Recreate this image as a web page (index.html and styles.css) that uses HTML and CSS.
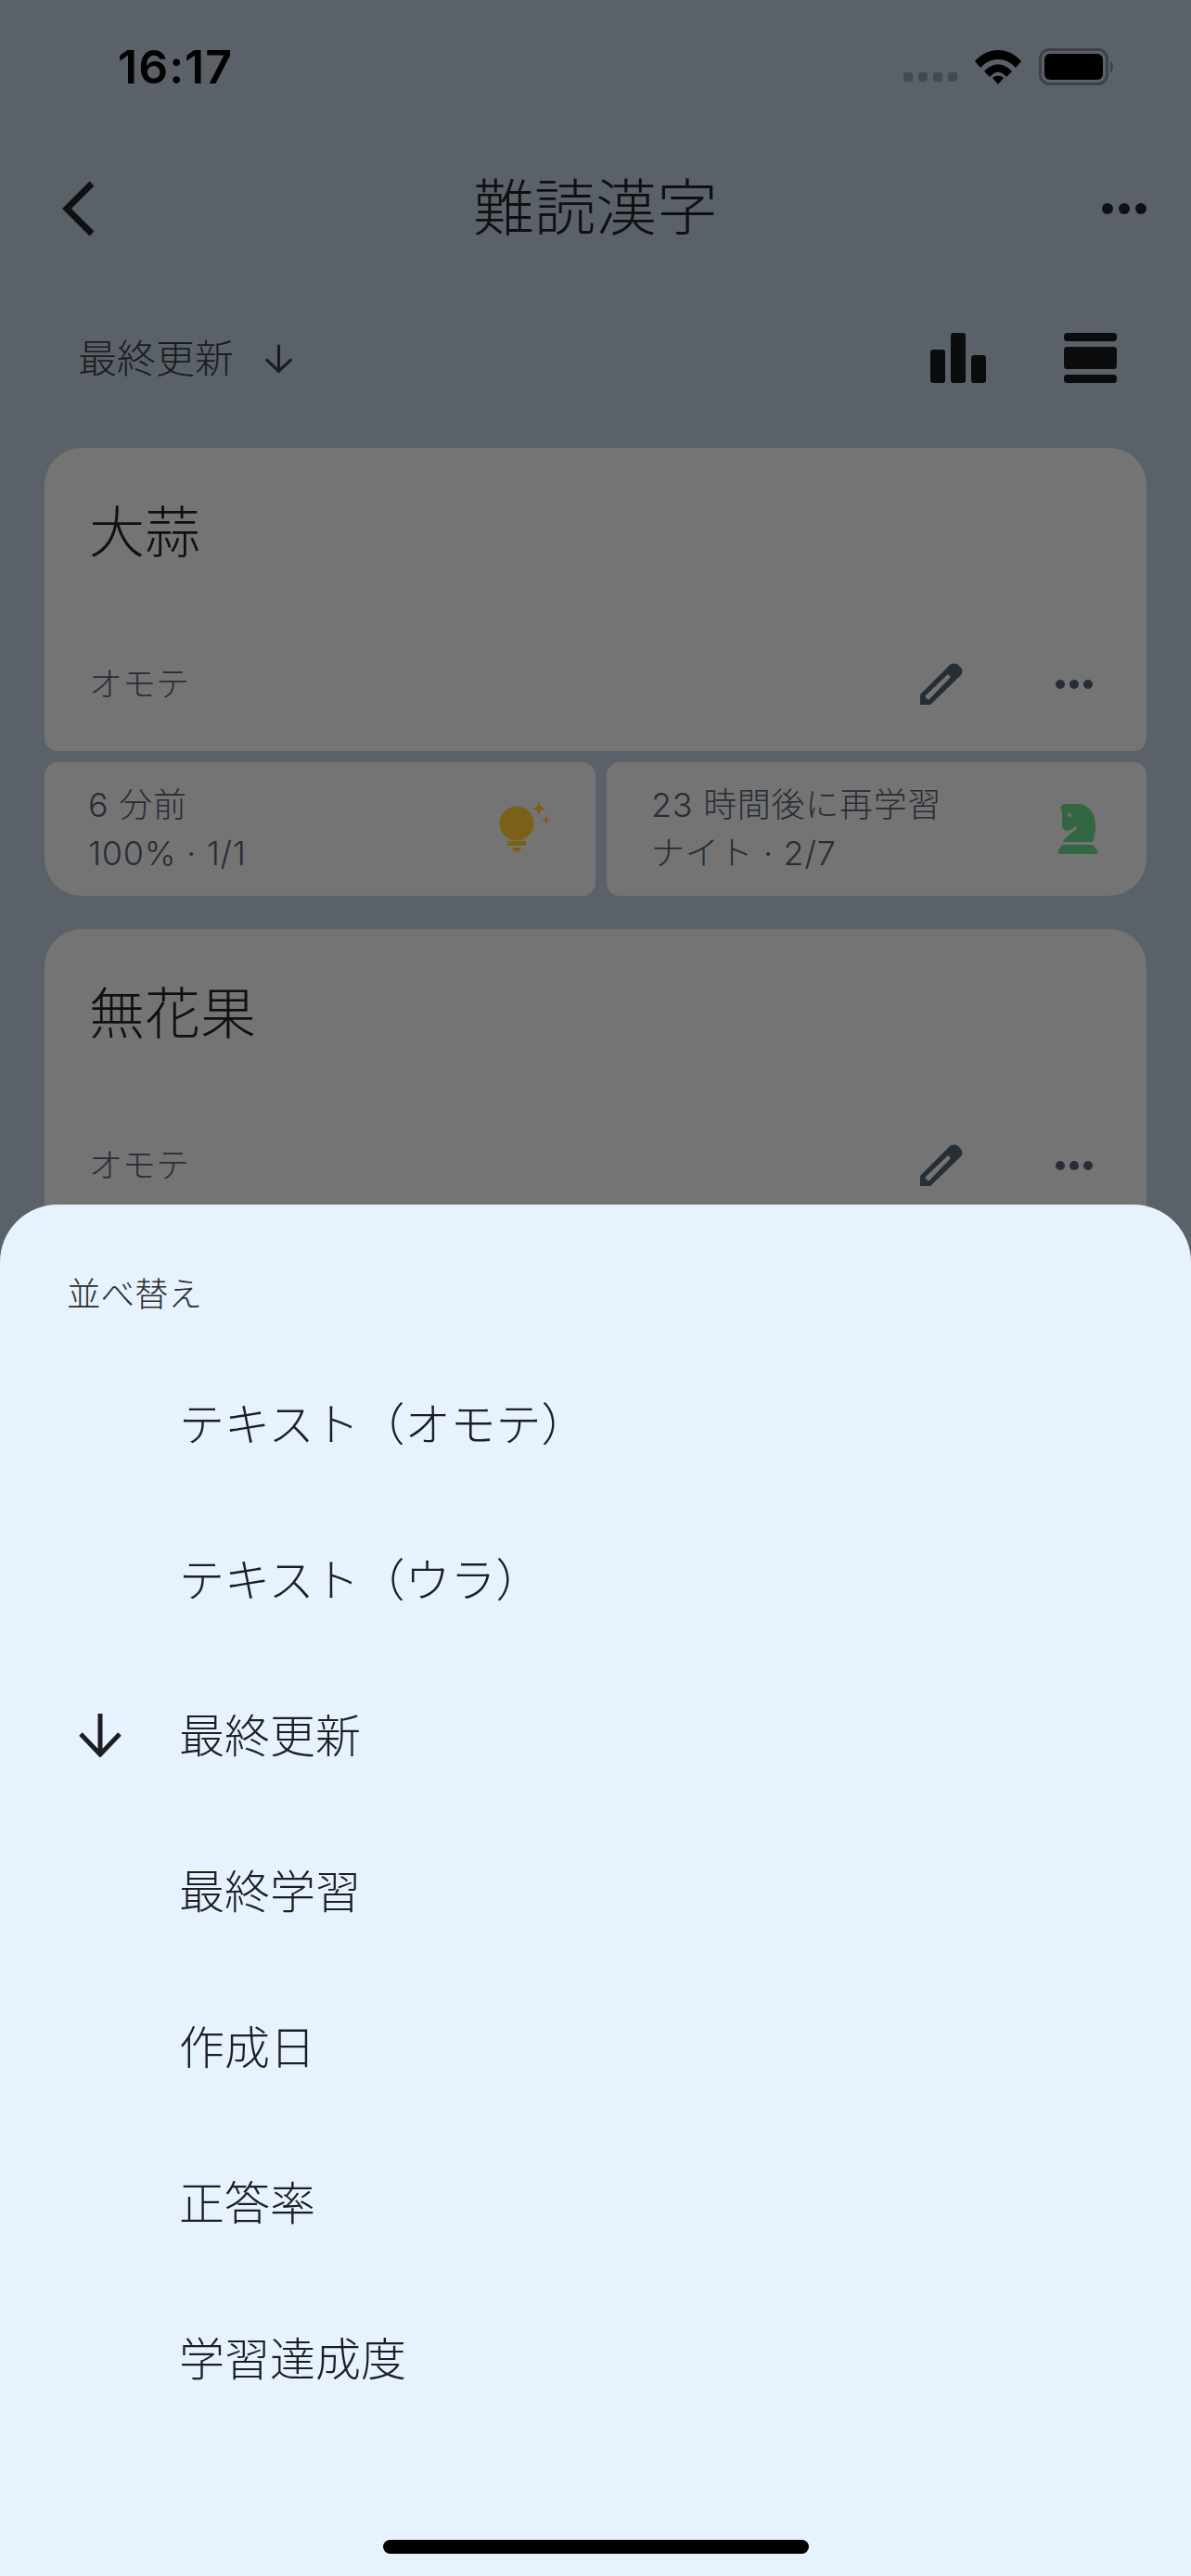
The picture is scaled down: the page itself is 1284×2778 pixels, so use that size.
FILE: index.html
```html
<!DOCTYPE html>
<html lang="ja">
<head>
    <meta charset="UTF-8">
    <title>難読漢字</title>
    <link rel="stylesheet" href="styles.css">
</head>
<body>
    <div class="page">
        <div class="status-bar">
            <span class="time">16:17</span>
            <div class="status-icons">
                <div class="signal"><i></i><i></i><i></i><i></i></div>
                <svg class="wifi" width="50" height="38" viewBox="0 0 50 38">
                    <path d="M0 13 C14 -3 36 -3 50 13 L44 20 C33 8 17 8 6 20Z" fill="#000"/>
                    <path d="M10 24 C19 14 31 14 40 24 L34 30 C28 23 22 23 16 30Z" fill="#000"/>
                    <path d="M19 31 C22 28 28 28 31 31 L25 38Z" fill="#000"/>
                </svg>
                <svg class="battery" width="82" height="40" viewBox="0 0 82 40">
                    <rect x="1.5" y="1.5" width="72" height="37" rx="10" fill="none" stroke="#3e4248" stroke-width="3"/>
                    <rect x="6" y="6" width="63" height="28" rx="6" fill="#000"/>
                    <path d="M77 14 C81 15 81 25 77 26Z" fill="#3e4248"/>
                </svg>
            </div>
        </div>

        <header class="app-bar">
            <svg class="back" width="36" height="60" viewBox="0 0 36 60">
                <path d="M33 3 L6 30 L33 57" fill="none" stroke="#0e1012" stroke-width="7"/>
            </svg>
            <h1>難読漢字</h1>
            <svg class="more" width="48" height="12" viewBox="0 0 48 12">
                <circle cx="6" cy="6" r="6"/><circle cx="24" cy="6" r="6"/><circle cx="42" cy="6" r="6"/>
            </svg>
        </header>

        <div class="toolbar">
            <div class="sort">
                <span>最終更新</span>
                <svg width="33" height="33" viewBox="0 0 36 36">
                    <path d="M18 2 V33 M3 19 L18 33 L33 19" fill="none" stroke="#1a1c1f" stroke-width="3.4"/>
                </svg>
            </div>
            <div class="tools">
                <svg width="60" height="54" viewBox="0 0 60 54">
                    <rect x="0" y="18" width="16" height="36" rx="3"/>
                    <rect x="22" y="0" width="16" height="54" rx="3"/>
                    <rect x="44" y="24" width="16" height="30" rx="3"/>
                </svg>
                <svg width="57" height="54" viewBox="0 0 57 54">
                    <rect x="0" y="0" width="57" height="9" rx="3.5"/>
                    <rect x="0" y="15" width="57" height="24" rx="3.5"/>
                    <rect x="0" y="45" width="57" height="9" rx="3.5"/>
                </svg>
            </div>
        </div>

        <section class="note">
            <div class="card">
                <div class="card-title">大蒜</div>
                <div class="card-foot">
                    <span class="side">オモテ</span>
                    <svg class="pencil" width="46" height="46" viewBox="0 0 46 46">
                        <path fill-rule="evenodd" d="M0 45 V34 L31 3 C34 0 38 0 41 2 L43 4 C46 7 46 10 44 13 L11 45Z M5 36 L30 12 L33 15 L9 40Z"/>
                    </svg>
                    <svg class="more-small" width="40" height="10" viewBox="0 0 40 10">
                        <circle cx="5" cy="5" r="5"/><circle cx="20" cy="5" r="5"/><circle cx="35" cy="5" r="5"/>
                    </svg>
                </div>
            </div>
            <div class="stats">
                <div class="stat stat-left">
                    <div class="stat-text">
                        <div>6 分前</div>
                        <div>100% · 1/1</div>
                    </div>
                    <svg class="bulb" width="56" height="55" viewBox="0 0 56 55" fill="#7b6018">
                        <circle cx="19" cy="24" r="18.5"/>
                        <rect x="9" y="43" width="20" height="5"/>
                        <path d="M14 50 H24 C23 56 15 56 14 50Z"/>
                        <path d="M43 0 L45 6 L51 8 L45 10 L43 16 L41 10 L35 8 L41 6Z"/>
                        <path d="M51 15 L52.2 18.8 L56 20 L52.2 21.2 L51 25 L49.8 21.2 L46 20 L49.8 18.8Z"/>
                    </svg>
                </div>
                <div class="stat stat-right">
                    <div class="stat-text">
                        <div>23 時間後に再学習</div>
                        <div>ナイト · 2/7</div>
                    </div>
                    <svg width="44" height="54" viewBox="0 0 44 54" fill="#336741">
                        <path d="M6 0 H22 C33 0 41 9 41 24 C41 31 40 36 38 41 H6 C8 36 13 33 18 29 C21 27 22 25 20 24 L14 28 C10 30 5 28 5 24 V9 L3 4Z"/>
                        <circle cx="13" cy="12" r="2" fill="#747474"/>
                        <path d="M5 44 H38 L43 50 C44 52 43 54 41 54 H3 C1 54 0 52 1 50Z"/>
                    </svg>
                </div>
            </div>
        </section>

        <section class="note">
            <div class="card">
                <div class="card-title">無花果</div>
                <div class="card-foot">
                    <span class="side">オモテ</span>
                    <svg class="pencil" width="46" height="46" viewBox="0 0 46 46">
                        <path fill-rule="evenodd" d="M0 45 V34 L31 3 C34 0 38 0 41 2 L43 4 C46 7 46 10 44 13 L11 45Z M5 36 L30 12 L33 15 L9 40Z"/>
                    </svg>
                    <svg class="more-small" width="40" height="10" viewBox="0 0 40 10">
                        <circle cx="5" cy="5" r="5"/><circle cx="20" cy="5" r="5"/><circle cx="35" cy="5" r="5"/>
                    </svg>
                </div>
            </div>
        </section>

        <div class="sheet">
            <div class="sheet-title">並べ替え</div>
            <ul class="sort-list">
                <li><span class="mark"></span>テキスト（オモテ）</li>
                <li><span class="mark"></span>テキスト（ウラ）</li>
                <li>
                    <span class="mark mark-on">
                        <svg width="48" height="48" viewBox="0 0 48 48">
                            <path d="M24 1 V45 M3 23 L24 45 L45 23" fill="none" stroke="#1c1e21" stroke-width="5"/>
                        </svg>
                    </span>最終更新
                </li>
                <li><span class="mark"></span>最終学習</li>
                <li><span class="mark"></span>作成日</li>
                <li><span class="mark"></span>正答率</li>
                <li><span class="mark"></span>学習達成度</li>
            </ul>
            <div class="home-bar"></div>
        </div>
    </div>
</body>
</html>
```
FILE: styles.css
```css
* {
    box-sizing: border-box;
}
html, body {
    margin: 0;
    width: 1284px;
    height: 2778px;
    overflow: hidden;
}
body {
    background: #5b6169;
    color: #0e1012;
    font-family: Inter, "Noto Sans CJK JP", sans-serif;
    font-weight: 300;
}
.page {
    position: relative;
    height: 2778px;
    overflow: hidden;
    padding: 0 48px;
}

/* status bar */
.status-bar {
    display: flex;
    justify-content: space-between;
    align-items: center;
    height: 144px;
    padding: 0 34px 0 79px;
}
.time {
    font-size: 50px;
    font-weight: 600;
    color: #000;
    letter-spacing: 1px;
}
.status-icons {
    display: flex;
    align-items: center;
    gap: 19px;
}
.signal {
    display: flex;
    gap: 6px;
    margin-top: 22px;
}
.signal i {
    width: 10px;
    height: 10px;
    border-radius: 3px;
    background: #44484f;
}

/* app bar */
.app-bar {
    display: grid;
    grid-template-columns: 1fr auto 1fr;
    align-items: center;
    height: 162px;
    margin-left: 18px;
}
.app-bar h1 {
    margin: 0 18px 2px 0;
    font-size: 66px;
    font-weight: 300;
    line-height: 90px;
}
.more {
    fill: #0e1012;
    justify-self: end;
}

/* sort + view toolbar */
.toolbar {
    display: flex;
    align-items: center;
    justify-content: space-between;
    height: 130px;
    padding: 0 32px 0 36px;
    margin-top: 15px;
}
.sort {
    display: flex;
    align-items: center;
    gap: 32px;
    font-size: 42px;
    color: #1a1c1f;
}
.sort span {
    margin-bottom: 5px;
}
.tools {
    display: flex;
    gap: 84px;
    fill: #0b0c0e;
}

/* note cards */
.note {
    margin-bottom: 36px;
}
.card {
    display: flex;
    flex-direction: column;
    justify-content: space-between;
    height: 327px;
    margin-top: 32px;
    padding: 48px 58px 46px 48px;
    background: #747474;
    border-radius: 40px 40px 14px 14px;
}
.card-title {
    font-size: 60px;
    line-height: 86px;
}
.card-foot {
    display: flex;
    align-items: center;
    color: #272d35;
    fill: #272d35;
}
.side {
    flex: 1;
    font-size: 36px;
    line-height: 52px;
}
.more-small {
    margin-left: 100px;
}
.stats {
    display: flex;
    gap: 12px;
    margin-top: 12px;
}
.stat {
    display: flex;
    align-items: center;
    justify-content: space-between;
    height: 144px;
    background: #747474;
    color: #272d35;
    font-size: 36px;
    line-height: 52px;
    letter-spacing: 0.7px;
}
.stat-left {
    width: 594px;
    padding: 0 48px 0 47px;
    border-radius: 14px 14px 14px 40px;
}
.stat-right {
    flex: 1;
    padding: 0 52px 0 48px;
    border-radius: 14px 14px 40px 14px;
}
.bulb {
    margin-top: -5px;
}

/* bottom sheet */
.sheet {
    position: absolute;
    left: 0;
    right: 0;
    top: 1299px;
    bottom: 0;
    background: #e7f2ff;
    border-radius: 62px 62px 0 0;
    padding: 72px 0 0;
    color: #1c1e21;
}
.sheet-title {
    padding-left: 72px;
    font-size: 36.5px;
    line-height: 50px;
    color: #2a2d31;
}
.sort-list {
    list-style: none;
    margin: 27px 0 0;
    padding: 0;
}
.sort-list li {
    display: flex;
    align-items: center;
    height: 168px;
    font-size: 49px;
}
.mark {
    display: flex;
    justify-content: center;
    width: 193px;
    padding-left: 22px;
}
.mark-on {
    padding-top: 5px;
}
.home-bar {
    position: absolute;
    left: 413px;
    bottom: 24px;
    width: 459px;
    height: 15px;
    border-radius: 8px;
    background: #000;
}
```
